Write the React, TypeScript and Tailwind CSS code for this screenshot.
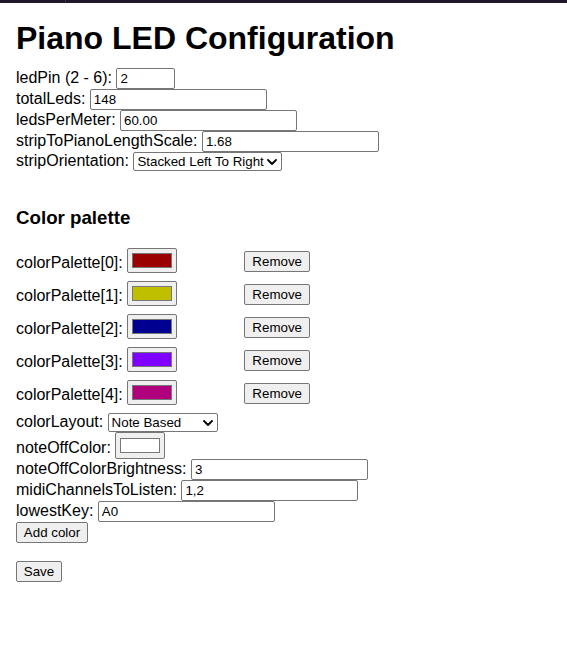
import React from 'react';

const PALETTE = ['#9b0000', '#bfbf00', '#000090', '#8000ff', '#b0007e'];

function Chevron() {
  return (
    <svg width="10" height="6" viewBox="0 0 10 6" className="shrink-0">
      <path d="M1 1 L5 5 L9 1" fill="none" stroke="#000" strokeWidth="1.8" strokeLinecap="round" strokeLinejoin="round" />
    </svg>
  );
}

function FakeSelect({ value, width }: { value: string; width: string }) {
  return (
    <div className={`${width} h-[19px] flex items-center justify-between border border-[#767676] rounded-[2px] bg-white pl-[3px] pr-[4px] text-[13.33px] leading-none`}>
      <span>{value}</span>
      <Chevron />
    </div>
  );
}

function ColorInput({ color, tall }: { color: string; tall?: boolean }) {
  return (
    <div className={`w-[50px] ${tall ? 'h-[27px] py-[5px]' : 'h-[25px] py-[4px]'} px-[4px] border border-[#767676] rounded-[2px] bg-[#efefef] shrink-0`}>
      <div className="w-[40px] h-[15px] border border-[#777]" style={{ backgroundColor: color }} />
    </div>
  );
}

function Button({ label, width }: { label: string; width: string }) {
  return (
    <button className={`${width} h-[21px] flex items-center justify-center border border-[#767676] rounded-[2px] bg-[#efefef] text-[13.33px] leading-none text-black`}>
      {label}
    </button>
  );
}

function TextRow({ label, value, width = 'w-[177px]' }: { label: string; value: string; width?: string }) {
  return (
    <div className="flex h-[21px] items-start gap-[4.45px]">
      <span className="leading-[19px]">{label}</span>
      <input
        readOnly
        defaultValue={value}
        className={`${width} h-[21px] border border-[#767676] rounded-[2px] bg-white px-[3px] text-[13.33px] text-black outline-none`}
      />
    </div>
  );
}

export default function App() {
  return (
    <div className="min-h-screen bg-white text-black text-[16px] font-['Liberation_Sans',Arial,sans-serif]">
      {/* window strip */}
      <div className="h-[3px] bg-[#1d1729] flex">
        <div className="w-[65px]" />
        <div className="w-px bg-[#3a3346]" />
      </div>

      <main className="px-4">
        <h1 className="mt-[17px] text-[32px] leading-[37px] font-bold">Piano LED Configuration</h1>

        <form className="mt-[11px]">
          <TextRow label="ledPin (2 - 6):" value="2" width="w-[59px]" />
          <TextRow label="totalLeds:" value="148" />
          <TextRow label="ledsPerMeter:" value="60.00" />
          <TextRow label="stripToPianoLengthScale:" value="1.68" />
          <div className="flex h-[19px] items-start gap-[4.45px]">
            <span className="leading-[18px]">stripOrientation:</span>
            <FakeSelect value="Stacked Left To Right" width="w-[149px]" />
          </div>

          <h3 className="mt-[36px] mb-[19px] text-[18.72px] leading-[22px] font-bold">Color palette</h3>

          {PALETTE.map((c, i) => (
            <div key={i} className="flex h-[33px] items-start">
              <span className="mt-[6px] leading-[18px]">colorPalette[{i}]:</span>
              <div className="ml-[4.45px]">
                <ColorInput color={c} />
              </div>
              <div className="ml-[67px] mt-[3px]">
                <Button label="Remove" width="w-[66px]" />
              </div>
            </div>
          ))}

          <div className="flex h-[19px] items-start gap-[4.45px]">
            <span className="leading-[18px]">colorLayout:</span>
            <FakeSelect value="Note Based" width="w-[110px]" />
          </div>
          <div className="flex h-[27px] items-start gap-[4.45px]">
            <span className="mt-[7px] leading-[18px]">noteOffColor:</span>
            <ColorInput color="#ffffff" tall />
          </div>
          <TextRow label="noteOffColorBrightness:" value="3" />
          <TextRow label="midiChannelsToListen:" value="1,2" />
          <TextRow label="lowestKey:" value="A0" />
          <Button label="Add color" width="w-[72px]" />
          <div className="mt-[18px]">
            <Button label="Save" width="w-[46px]" />
          </div>
        </form>
      </main>
    </div>
  );
}
